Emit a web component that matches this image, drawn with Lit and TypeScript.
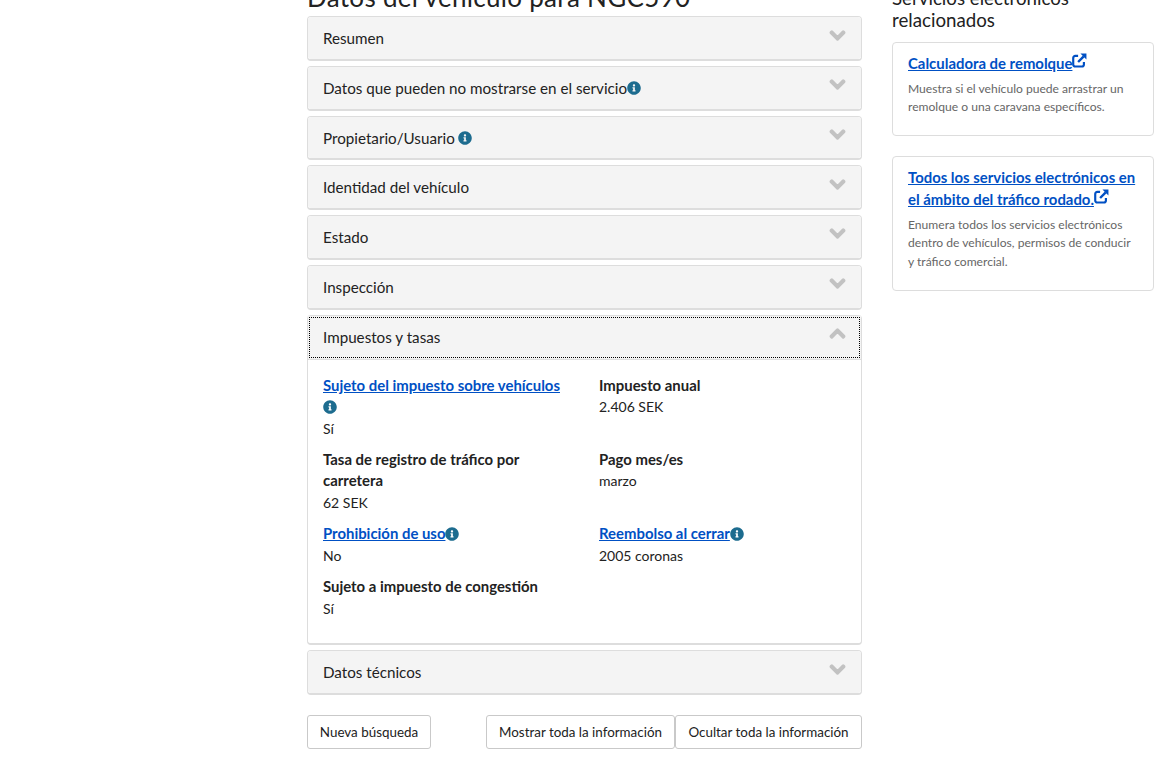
import { LitElement, html, css, svg } from "lit";
import { customElement } from "lit/decorators.js";

const info = html`<svg class="info" viewBox="0 0 512 512" aria-hidden="true"><path fill="currentColor" d="M256 8C119 8 8 119.1 8 256c0 137 111 248 248 248s248-111 248-248C504 119.1 393 8 256 8zm0 110c23.2 0 42 18.8 42 42s-18.8 42-42 42-42-18.8-42-42 18.8-42 42-42zm56 254c0 6.6-5.4 12-12 12h-88c-6.6 0-12-5.4-12-12v-24c0-6.6 5.4-12 12-12h12v-64h-12c-6.6 0-12-5.4-12-12v-24c0-6.6 5.4-12 12-12h64c6.6 0 12 5.4 12 12v100h12c6.6 0 12 5.4 12 12v24z"/></svg>`;
const chevron = svg`<path fill="currentColor" stroke="currentColor" stroke-width="44" stroke-linejoin="round" d="M207.029 381.476L12.686 187.132c-9.373-9.373-9.373-24.569 0-33.941l22.667-22.667c9.357-9.357 24.522-9.375 33.901-.04L224 284.505l154.745-154.021c9.379-9.335 24.544-9.317 33.901.04l22.667 22.667c9.373 9.373 9.373 24.569 0 33.941L240.971 381.476c-9.373 9.372-24.569 9.372-33.942 0z"/>`;
const ext = html`<svg class="ext" viewBox="0 0 16 16" aria-hidden="true"><path fill="none" stroke="currentColor" stroke-width="2.3" d="M6.5 3H3.5A2.2 2.2 0 0 0 1.3 5.2v7A2.2 2.2 0 0 0 3.5 14.4h7a2.2 2.2 0 0 0 2.2-2.2V9.5"/><path fill="none" stroke="currentColor" stroke-width="2.6" d="M6.5 9.6 12.5 3.6"/><path fill="currentColor" d="M9 .6h6.4V7z"/></svg>`;

@customElement("app-root")
export class AppRoot extends LitElement {
  static styles = css`
    :host { display: block; font-family: "Lato", "Noto Sans", sans-serif; color: #222; height: 767px; overflow: hidden; }
    .page { display: flex; gap: 30px; padding-left: 307px; margin-top: -20px; align-items: flex-start; }
    .main { width: 555px; flex: none; }
    h1 { margin: 0; font-size: 26px; font-weight: 400; line-height: 35px; height: 36.4px; white-space: nowrap; color: #222; letter-spacing: .3px; }
    .acc { display: flex; flex-direction: column; gap: 5px; }
    .item { border: 1px solid #ddd; border-bottom-width: 2px; border-radius: 4px; background: #fff; }
    .head { height: 41.7px; box-sizing: border-box; display: flex; align-items: center; justify-content: space-between; background: #f4f4f4; padding: 0 15px; font-size: 15.2px; border-radius: 3px; }
    .head .t { display: flex; align-items: center; gap: 0; }
    .chev { width: 17px; height: 17px; color: #c2c2c2; margin-top: -6px; }
    .up { transform: rotate(180deg); margin-top: -7px; }
    .open .head { outline: 1px dotted #000; outline-offset: -2px; height: 43px; border-radius: 0; }
    .rule { height: 1px; background: #ddd; }
    .info { width: 14px; height: 14px; color: #1d6c8f; flex: none; vertical-align: -2px; }
    .gapi { margin-left: 3px; }
    .grid { display: grid; grid-template-columns: 276px 1fr; row-gap: 9.6px; padding: 15px 15px 24px; font-size: 14px; line-height: 21.6px; }
    .f { padding-right: 26px; }
    .l { font-weight: 700; font-size: 14.9px; display: block; }
    .l a, .card a { color: #0050c4; text-decoration: underline; }
    .actions { display: flex; margin-top: 20px; }
    button { font: inherit; font-size: 13.4px; height: 34px; background: #fff; border: 1px solid #c9c9c9; border-radius: 3px; color: #222; padding: 0; }
    .b1 { width: 124px; margin-right: 55px; }
    .b2 { width: 189px; }
    .b3 { width: 187px; }
    aside { width: 262px; flex: none; padding-top: 7px; }
    h2 { margin: 0 0 11px; font-size: 18.7px; font-weight: 400; line-height: 22px; color: #222; }
    .card { border: 1px solid #ddd; border-radius: 4px; padding: 9px 15px 18.5px; margin-bottom: 20px; }
    .card a { font-weight: 700; font-size: 14.9px; line-height: 22px; display: block; }
    .card p { margin: 5.5px 0 0; font-size: 12.1px; line-height: 18.6px; color: #666; }
    .ext { width: 15px; height: 15px; color: #0050c4; vertical-align: 1px; }
  `;

  private row(title: string, icon: unknown = "") {
    return html`<div class="item"><div class="head"><span class="t">${title}${icon}</span><svg class="chev" viewBox="0 0 448 512" aria-hidden="true">${chevron}</svg></div></div>`;
  }

  render() {
    return html`<div class="page">
      <div class="main">
        <h1>Datos del vehículo para NGC590</h1>
        <div class="acc">
          ${this.row("Resumen")}
          ${this.row("Datos que pueden no mostrarse en el servicio", info)}
          ${this.row("Propietario/Usuario", html`<span class="gapi"></span>${info}`)}
          ${this.row("Identidad del vehículo")}
          ${this.row("Estado")}
          ${this.row("Inspección")}
          <div class="item open">
            <div class="head"><span class="t">Impuestos y tasas</span><svg class="chev up" viewBox="0 0 448 512" aria-hidden="true">${chevron}</svg></div>
            <div class="rule"></div>
            <div class="grid">
              <div class="f"><span class="l"><a href="#">Sujeto del impuesto sobre vehículos</a> ${info}</span>Sí</div>
              <div class="f"><span class="l">Impuesto anual</span>2.406 SEK</div>
              <div class="f"><span class="l">Tasa de registro de tráfico por carretera</span>62 SEK</div>
              <div class="f"><span class="l">Pago mes/es</span>marzo</div>
              <div class="f"><span class="l"><a href="#">Prohibición de uso</a>${info}</span>No</div>
              <div class="f"><span class="l"><a href="#">Reembolso al cerrar</a>${info}</span>2005 coronas</div>
              <div class="f"><span class="l">Sujeto a impuesto de congestión</span>Sí</div>
            </div>
          </div>
          ${this.row("Datos técnicos")}
        </div>
        <div class="actions">
          <button class="b1">Nueva búsqueda</button>
          <button class="b2">Mostrar toda la información</button>
          <button class="b3">Ocultar toda la información</button>
        </div>
      </div>
      <aside>
        <h2>Servicios electrónicos relacionados</h2>
        <div class="card">
          <a href="#">Calculadora de remolque${ext}</a>
          <p>Muestra si el vehículo puede arrastrar un remolque o una caravana específicos.</p>
        </div>
        <div class="card">
          <a href="#">Todos los servicios electrónicos en el ámbito del tráfico rodado.${ext}</a>
          <p>Enumera todos los servicios electrónicos dentro de vehículos, permisos de conducir y tráfico comercial.</p>
        </div>
      </aside>
    </div>`;
  }
}
